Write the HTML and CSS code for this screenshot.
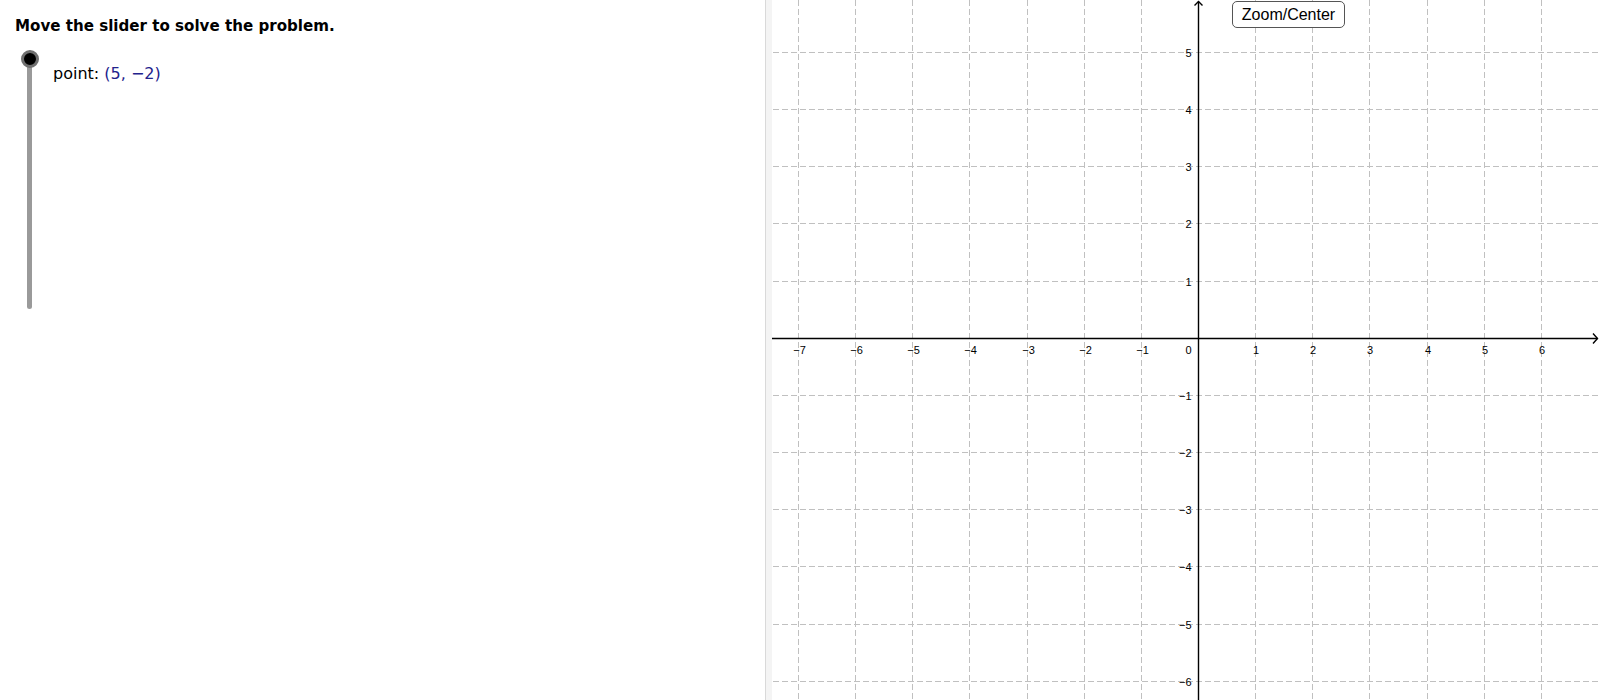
FILE: index.html
```html
<!DOCTYPE html>
<html lang="en">
<head>
<meta charset="utf-8">
<title>Slider problem</title>
<link rel="stylesheet" href="styles.css">
</head>
<body>
<div class="app">
  <section class="algebra">
    <h1 class="title">Move the slider to solve the problem.</h1>
    <div class="slider-row">
      <div class="slider"><span class="knob"></span></div>
      <div class="point-label">point: <span class="val">(5, −2)</span></div>
    </div>
  </section>
  <div class="divider"></div>
  <section class="graphics">
    <svg class="plot" width="828" height="700" viewBox="0 0 828 700" xmlns="http://www.w3.org/2000/svg">
      <g class="grid-v">
        <line x1="26.5" y1="0" x2="26.5" y2="700"/>
        <line x1="83.5" y1="0" x2="83.5" y2="700"/>
        <line x1="140.5" y1="0" x2="140.5" y2="700"/>
        <line x1="197.5" y1="0" x2="197.5" y2="700"/>
        <line x1="255.5" y1="0" x2="255.5" y2="700"/>
        <line x1="312.5" y1="0" x2="312.5" y2="700"/>
        <line x1="369.5" y1="0" x2="369.5" y2="700"/>
        <line x1="483.5" y1="0" x2="483.5" y2="700"/>
        <line x1="540.5" y1="0" x2="540.5" y2="700"/>
        <line x1="597.5" y1="0" x2="597.5" y2="700"/>
        <line x1="655.5" y1="0" x2="655.5" y2="700"/>
        <line x1="712.5" y1="0" x2="712.5" y2="700"/>
        <line x1="769.5" y1="0" x2="769.5" y2="700"/>
      </g>
      <g class="grid-h">
        <line x1="0" y1="52.5" x2="828" y2="52.5"/>
        <line x1="0" y1="109.5" x2="828" y2="109.5"/>
        <line x1="0" y1="166.5" x2="828" y2="166.5"/>
        <line x1="0" y1="223.5" x2="828" y2="223.5"/>
        <line x1="0" y1="281.5" x2="828" y2="281.5"/>
        <line x1="0" y1="395.5" x2="828" y2="395.5"/>
        <line x1="0" y1="452.5" x2="828" y2="452.5"/>
        <line x1="0" y1="509.5" x2="828" y2="509.5"/>
        <line x1="0" y1="566.5" x2="828" y2="566.5"/>
        <line x1="0" y1="624.5" x2="828" y2="624.5"/>
        <line x1="0" y1="681.5" x2="828" y2="681.5"/>
      </g>
      <g class="axes">
        <line x1="0" y1="338.5" x2="825.5" y2="338.5"/>
        <polyline points="821,333.5 825.5,338.5 821,343.5"/>
        <line x1="426.5" y1="700" x2="426.5" y2="1.5"/>
        <polyline points="422.5,5.5 426.5,1.5 430.5,5.5"/>
      </g>
      <g class="xlabels">
        <text x="27.5" y="354">−7</text>
        <text x="84.5" y="354">−6</text>
        <text x="141.5" y="354">−5</text>
        <text x="198.5" y="354">−4</text>
        <text x="256.5" y="354">−3</text>
        <text x="313.5" y="354">−2</text>
        <text x="370.5" y="354">−1</text>
        <text x="484" y="354">1</text>
        <text x="541" y="354">2</text>
        <text x="598" y="354">3</text>
        <text x="656" y="354">4</text>
        <text x="713" y="354">5</text>
        <text x="770" y="354">6</text>
      </g>
      <g class="ylabels">
        <text x="419.5" y="57">5</text>
        <text x="419.5" y="114">4</text>
        <text x="419.5" y="171">3</text>
        <text x="419.5" y="228">2</text>
        <text x="419.5" y="286">1</text>
        <text x="419.5" y="354">0</text>
        <text x="419.5" y="400">−1</text>
        <text x="419.5" y="457">−2</text>
        <text x="419.5" y="514">−3</text>
        <text x="419.5" y="571">−4</text>
        <text x="419.5" y="629">−5</text>
        <text x="419.5" y="686">−6</text>
      </g>
    </svg>
    <button class="zoom-btn" type="button">Zoom/Center</button>
  </section>
</div>
</body>
</html>
```

FILE: styles.css
```css
html, body {
  margin: 0;
  padding: 0;
  background: #ffffff;
  overflow: hidden;
}

.app {
  display: flex;
  width: 1600px;
  height: 700px;
}

.algebra {
  flex: none;
  width: 765px;
  box-sizing: border-box;
  padding: 17px 0 0 15px;
  font-family: "DejaVu Sans", sans-serif;
  color: #000;
}

.title {
  margin: 0;
  font-size: 15.1px;
  line-height: 18px;
  font-weight: bold;
}

.slider-row {
  display: flex;
  align-items: flex-start;
  margin-top: 24px;
}

.slider {
  position: relative;
  flex: none;
  width: 5px;
  height: 250px;
  margin-left: 12px;
  background: #9a9a9a;
  border-radius: 0 0 2.5px 2.5px;
}

.knob {
  position: absolute;
  left: -6.5px;
  top: -9px;
  width: 12px;
  height: 12px;
  border: 3px solid #707070;
  border-radius: 50%;
  background: #000;
}

.point-label {
  margin: 4.5px 0 0 21px;
  font-size: 16px;
  line-height: 20px;
}

.val {
  color: #22228c;
}

.divider {
  flex: none;
  width: 6px;
  height: 700px;
  border-left: 1px solid #d9d9d9;
  background: #f4f4f4;
}

.graphics {
  position: relative;
  flex: none;
  width: 828px;
  height: 700px;
  overflow: hidden;
  background: #fff;
}

.plot {
  display: block;
}

.grid-v line {
  stroke: #c0c0c0;
  stroke-width: 1;
  stroke-dasharray: 6 3;
  stroke-dashoffset: 0;
  shape-rendering: crispEdges;
}

.grid-h line {
  stroke: #c0c0c0;
  stroke-width: 1;
  stroke-dasharray: 6 3;
  stroke-dashoffset: 8;
  shape-rendering: crispEdges;
}

.axes line,
.axes polyline {
  stroke: #000;
  stroke-width: 1.4;
  fill: none;
}

.xlabels text,
.ylabels text {
  font-family: "Liberation Sans", Arial, sans-serif;
  font-size: 11px;
  fill: #000;
}

.xlabels text {
  text-anchor: middle;
}

.ylabels text {
  text-anchor: end;
}

.zoom-btn {
  position: absolute;
  left: 460px;
  top: 1px;
  width: 113px;
  height: 27px;
  box-sizing: border-box;
  margin: 0;
  padding: 0;
  border: 1.5px solid #555;
  border-radius: 5px;
  background: #fff;
  color: #000;
  font-family: "Liberation Sans", Arial, sans-serif;
  font-size: 16px;
  line-height: 24px;
  cursor: pointer;
}
```
